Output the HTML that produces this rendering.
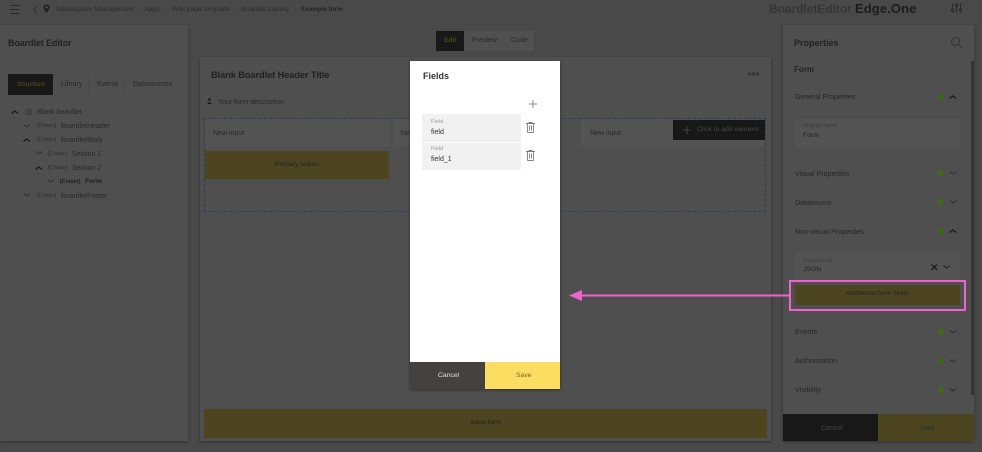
<!DOCTYPE html>
<html><head><meta charset="utf-8"><style>
html,body{margin:0;padding:0;width:982px;height:452px;overflow:hidden;background:#494949;font-family:"Liberation Sans",sans-serif;}
.a{position:absolute;white-space:nowrap;line-height:1;}
.p{position:absolute;background:#4f4f4f;box-shadow:0 1px 3px rgba(0,0,0,.35);}
svg{position:absolute;overflow:visible;fill:none;}
.t{color:#262626;font-size:7.2px;}
.d{color:#292929;font-size:7px;}
.c{color:#2e2e2e;font-size:5.6px;}
.b{color:#222;font-size:6.8px;}
.s{width:1px;height:9px;background:#444;top:5px;}
.dot{position:absolute;width:6px;height:6px;border-radius:50%;background:#3f6a12;left:938px;}
</style></head><body>

<!-- top bar -->
<svg style="left:10px;top:5px" width="10" height="8" stroke="#2a2a2a" stroke-width="1"><path d="M0 .5H9.5M0 4.5H9.5M0 8.5H9.5"/></svg>
<svg style="left:33px;top:6px" width="4" height="8" stroke="#2a2a2a" stroke-width=".8"><path d="M3.5 .5L.7 3.7L3.5 7"/></svg>
<svg style="left:43px;top:4px" width="7" height="10" fill="none"><path d="M3.5 .5C1.5 .5.5 2 .5 3.5C.5 5.5 2.5 7.5 3.5 9C4.5 7.5 6.5 5.5 6.5 3.5C6.5 2 5.5 .5 3.5 .5Z" fill="#1f1f1f"/><circle cx="3.5" cy="3.3" r="1.2" fill="#555"/></svg>
<div class="a" style="left:56px;top:7px;font-size:6.8px;color:#2b2b2b">Namespace Management</div>
<div class="a s" style="left:138px"></div>
<div class="a" style="left:144px;top:7px;font-size:6.8px;color:#2b2b2b">Apps</div>
<div class="a s" style="left:165px"></div>
<div class="a" style="left:172px;top:7px;font-size:6.8px;color:#2b2b2b">Wiki page template</div>
<div class="a s" style="left:235px"></div>
<div class="a" style="left:241px;top:7px;font-size:6.8px;color:#2b2b2b">Boardlet Library</div>
<div class="a s" style="left:295px"></div>
<div class="a" style="left:301px;top:7px;font-size:6.3px;color:#242424;font-weight:bold">Example form</div>
<div class="a" style="left:769px;top:3px;font-size:12px;font-weight:bold;color:#363636;letter-spacing:-.05px">BoardletEditor</div>
<div class="a" style="left:855px;top:2px;font-size:13px;font-weight:bold;color:#1d1d1d;letter-spacing:.1px">Edge.One</div>
<svg style="left:951px;top:3px" width="11" height="10" stroke="#252525" stroke-width=".8"><path d="M1.5 0V10M5.5 0V10M9.5 0V10"/><circle cx="1.5" cy="7" r="1.2" fill="#494949"/><circle cx="5.5" cy="2.5" r="1.2" fill="#494949"/><circle cx="9.5" cy="7" r="1.2" fill="#494949"/></svg>

<!-- left panel -->
<div class="p" style="left:0;top:25px;width:188px;height:416px"></div>
<div class="a" style="left:8px;top:39px;font-size:9px;color:#222;font-weight:bold;letter-spacing:-.1px">Boardlet Editor</div>
<div class="a" style="left:8px;top:74px;width:45px;height:21px;background:#181818"></div>
<div class="a" style="left:17px;top:82px;font-size:6.3px;color:#4f4518;font-weight:bold">Structure</div>
<div class="a d" style="left:61px;top:81px">Library</div>
<div class="a d" style="left:97px;top:81px">Events</div>
<div class="a d" style="left:133px;top:81px">Datasources</div>
<div class="a" style="left:88px;top:76px;width:1px;height:18px;background:#494949"></div>
<div class="a" style="left:124px;top:76px;width:1px;height:18px;background:#494949"></div>

<svg style="left:11px;top:110px" width="8" height="4" stroke="#1c1c1c" stroke-width="1.3"><path d="M.5 3.5L3.8 1L7 3.5"/></svg>
<svg style="left:25px;top:109px" width="7" height="6" stroke="#333" stroke-width=".7"><rect x=".5" y=".5" width="6" height="5" rx="1"/><path d="M2 2.5H5M2 4H5"/></svg>
<div class="a d" style="left:37px;top:109px">Blank boardlet</div>
<svg style="left:23px;top:124px" width="8" height="4" stroke="#2a2a2a" stroke-width=".8"><path d="M.5 .5L3.8 3L7 .5"/></svg>
<div class="a c" style="left:37px;top:124px">[Cntain]</div><div class="a d" style="left:61px;top:123px">BoardletHeader</div>
<svg style="left:23px;top:138px" width="8" height="4" stroke="#1c1c1c" stroke-width="1.3"><path d="M.5 3.5L3.8 1L7 3.5"/></svg>
<div class="a c" style="left:37px;top:138px">[Cntain]</div><div class="a d" style="left:61px;top:137px">BoardletBody</div>
<svg style="left:35px;top:151px" width="8" height="4" stroke="#2a2a2a" stroke-width=".8"><path d="M.5 .5L3.8 3L7 .5"/></svg>
<div class="a c" style="left:48px;top:152px">[Cntain]</div><div class="a d" style="left:72px;top:151px">Section 1</div>
<svg style="left:35px;top:166px" width="8" height="4" stroke="#1c1c1c" stroke-width="1.3"><path d="M.5 3.5L3.8 1L7 3.5"/></svg>
<div class="a c" style="left:48px;top:166px">[Cntain]</div><div class="a d" style="left:72px;top:165px">Section 2</div>
<svg style="left:47px;top:179px" width="8" height="4" stroke="#2a2a2a" stroke-width=".8"><path d="M.5 .5L3.8 3L7 .5"/></svg>
<div class="a" style="left:60px;top:180px;font-size:5.4px;color:#1e1e1e;font-weight:bold">[Cntain]</div><div class="a" style="left:85px;top:179px;font-size:6.8px;color:#1c1c1c;font-weight:bold">Form</div>
<svg style="left:23px;top:193px" width="8" height="4" stroke="#2a2a2a" stroke-width=".8"><path d="M.5 .5L3.8 3L7 .5"/></svg>
<div class="a c" style="left:37px;top:194px">[Cntain]</div><div class="a d" style="left:61px;top:193px">BoardletFooter</div>

<!-- center -->
<div class="a" style="left:436px;top:31px;width:28px;height:20px;background:#181818"></div>
<div class="a" style="left:444px;top:38px;font-size:6.8px;color:#4f4518;font-weight:bold">Edit</div>
<div class="a" style="left:464px;top:31px;width:39px;height:20px;background:#505050"></div>
<div class="a" style="left:503px;top:31px;width:31px;height:20px;background:#505050"></div>
<div class="a d" style="left:472px;top:37px">Preview</div>
<div class="a d" style="left:511px;top:37px">Code</div>

<div class="p" style="left:200px;top:57px;width:571px;height:384px"></div>
<div class="a" style="left:211px;top:71px;font-size:9.2px;color:#202020;font-weight:bold;letter-spacing:-.05px">Blank Boardlet Header Title</div>
<svg style="left:748px;top:72px" width="11" height="4" stroke="#252525" stroke-width=".7"><circle cx="1.5" cy="2" r="1.1"/><circle cx="5.5" cy="2" r="1.1"/><circle cx="9.5" cy="2" r="1.1"/></svg>
<svg style="left:207px;top:98px" width="5" height="6"><circle cx="2.5" cy="1.5" r="1.4" fill="#1c1c1c"/><path d="M.3 6C.3 3.5 4.7 3.5 4.7 6Z" fill="#1c1c1c"/></svg>
<div class="a d" style="left:218px;top:99px">Your form description</div>
<div class="a" style="left:204px;top:118px;width:562px;height:94px;border:1px dashed #343b5e;box-sizing:border-box"></div>
<div class="a" style="left:205px;top:119px;width:184px;height:28px;background:#535353"></div>
<div class="a" style="left:393px;top:119px;width:88px;height:28px;background:#535353"></div>
<div class="a" style="left:581px;top:119px;width:183px;height:28px;background:#535353"></div>
<div class="a d" style="left:213px;top:130px">New input</div>
<div class="a d" style="left:401px;top:130px">New input</div>
<div class="a d" style="left:590px;top:130px">New input</div>
<div class="a" style="left:205px;top:151px;width:184px;height:28px;background:#4d4420"></div>
<div class="a b" style="left:275px;top:162px">Primary button</div>
<div class="a" style="left:673px;top:120px;width:92px;height:20px;background:#181818"></div>
<svg style="left:683px;top:126px" width="8" height="8" stroke="#4a4a4a" stroke-width=".8"><path d="M4 0V8M0 4H8"/></svg>
<div class="a" style="left:697px;top:127px;font-size:6.8px;color:#474747">Click to add element</div>
<div class="a" style="left:204px;top:409px;width:563px;height:29px;background:#4d4420"></div>
<div class="a b" style="left:470px;top:420px">Save form</div>

<!-- right panel -->
<div class="p" style="left:783px;top:25px;width:191px;height:416px"></div>
<div class="a" style="left:794px;top:39px;font-size:9px;color:#222;font-weight:bold">Properties</div>
<svg style="left:951px;top:37px" width="11" height="11" stroke="#2c2c2c" stroke-width=".8"><circle cx="4.5" cy="4.5" r="4"/><path d="M7.5 7.5L10.5 10.5"/></svg>
<div class="a" style="left:794px;top:66px;font-size:8px;color:#242424;font-weight:bold">Form</div>
<div class="a" style="left:971px;top:61px;width:3px;height:334px;background:#343434"></div>

<div class="a t" style="left:795px;top:93px">General Properties</div>
<div class="dot" style="top:94px"></div>
<svg style="left:949px;top:95px" width="8" height="4" stroke="#1c1c1c" stroke-width="1.3"><path d="M.5 3.5L3.8 1L7 3.5"/></svg>
<div class="a" style="left:795px;top:119px;width:165px;height:28px;background:#535353"></div>
<div class="a" style="left:803px;top:124px;font-size:5.6px;color:#3a3a3a">Display name</div>
<div class="a" style="left:803px;top:133px;font-size:6.8px;color:#222">Form</div>

<div class="a t" style="left:795px;top:170px">Visual Properties</div>
<div class="dot" style="top:170px"></div>
<svg style="left:949px;top:171px" width="8" height="4" stroke="#2a2a2a" stroke-width=".8"><path d="M.5 .5L3.8 3L7 .5"/></svg>
<div class="a t" style="left:795px;top:199px">Datasource</div>
<div class="dot" style="top:199px"></div>
<svg style="left:949px;top:200px" width="8" height="4" stroke="#2a2a2a" stroke-width=".8"><path d="M.5 .5L3.8 3L7 .5"/></svg>
<div class="a t" style="left:795px;top:228px">Non-visual Properties</div>
<div class="dot" style="top:228px"></div>
<svg style="left:949px;top:229px" width="8" height="4" stroke="#1c1c1c" stroke-width="1.3"><path d="M.5 3.5L3.8 1L7 3.5"/></svg>
<div class="a" style="left:795px;top:253px;width:165px;height:28px;background:#535353"></div>
<div class="a" style="left:803px;top:259px;font-size:5.6px;color:#3a3a3a">Data format</div>
<div class="a" style="left:803px;top:267px;font-size:6.8px;color:#222">JSON</div>
<svg style="left:931px;top:264px" width="7" height="7" stroke="#1c1c1c" stroke-width="1.4"><path d="M.5 .5L6 6M6 .5L.5 6"/></svg>
<svg style="left:943px;top:265px" width="8" height="4" stroke="#1c1c1c" stroke-width="1"><path d="M.5 .5L3.8 3L7 .5"/></svg>
<div class="a" style="left:795px;top:285px;width:165px;height:20px;background:#4d4420"></div>
<div class="a b" style="left:846px;top:291px">Additional form fields</div>

<div class="a t" style="left:795px;top:328px">Events</div>
<div class="dot" style="top:329px"></div>
<svg style="left:949px;top:330px" width="8" height="4" stroke="#2a2a2a" stroke-width=".8"><path d="M.5 .5L3.8 3L7 .5"/></svg>
<div class="a t" style="left:795px;top:357px">Authorization</div>
<div class="dot" style="top:358px"></div>
<svg style="left:949px;top:359px" width="8" height="4" stroke="#2a2a2a" stroke-width=".8"><path d="M.5 .5L3.8 3L7 .5"/></svg>
<div class="a t" style="left:795px;top:386px">Visibility</div>
<div class="dot" style="top:387px"></div>
<svg style="left:949px;top:388px" width="8" height="4" stroke="#2a2a2a" stroke-width=".8"><path d="M.5 .5L3.8 3L7 .5"/></svg>

<div class="a" style="left:783px;top:414px;width:95px;height:27px;background:#181818"></div>
<div class="a" style="left:878px;top:414px;width:96px;height:27px;background:#4d4420"></div>
<div class="a" style="left:821px;top:425px;font-size:7px;color:#444">Cancel</div>
<div class="a" style="left:919px;top:425px;font-size:7px;color:#2c2c2c">Save</div>

<!-- dialog -->
<div class="a" style="left:410px;top:61px;width:150px;height:328px;background:#fff;box-shadow:0 1px 3px rgba(0,0,0,.4)"></div>
<div class="a" style="left:423px;top:72px;font-size:9px;color:#333;font-weight:bold">Fields</div>
<svg style="left:529px;top:100px" width="8" height="8" stroke="#666" stroke-width=".7"><path d="M4 0V8M0 4H8"/></svg>
<div class="a" style="left:422px;top:114px;width:99px;height:28px;background:#f1f1f1"></div>
<div class="a" style="left:422px;top:143px;width:99px;height:27px;background:#f1f1f1"></div>
<div class="a" style="left:431px;top:120px;font-size:5.6px;color:#999">Field</div>
<div class="a" style="left:431px;top:129px;font-size:7px;color:#333">field</div>
<div class="a" style="left:431px;top:147px;font-size:5.6px;color:#999">Field</div>
<div class="a" style="left:431px;top:156px;font-size:7px;color:#333">field_1</div>
<svg style="left:526px;top:122px" width="9" height="11" stroke="#5a5a5a" stroke-width=".7"><path d="M0 1.5H9M3 1.5V.4H6V1.5M1.2 1.5L1.7 10.5H7.3L7.8 1.5M3.5 3.5V8.5M5.5 3.5V8.5"/></svg>
<svg style="left:526px;top:150px" width="9" height="11" stroke="#5a5a5a" stroke-width=".7"><path d="M0 1.5H9M3 1.5V.4H6V1.5M1.2 1.5L1.7 10.5H7.3L7.8 1.5M3.5 3.5V8.5M5.5 3.5V8.5"/></svg>
<div class="a" style="left:410px;top:362px;width:75px;height:27px;background:#434240"></div>
<div class="a" style="left:485px;top:362px;width:75px;height:27px;background:#fbdd62"></div>
<div class="a" style="left:438px;top:373px;font-size:6.8px;color:#e0e0e0">Cancel</div>
<div class="a" style="left:516px;top:373px;font-size:6.8px;color:#6b6433">Save</div>

<!-- annotation -->
<div class="a" style="left:789px;top:280px;width:177px;height:31px;border:2px solid #f062cc;box-sizing:border-box"></div>
<svg style="left:569px;top:290px" width="221" height="11"><path d="M220 5.5H10" stroke="#f062cc" stroke-width="2"/><path d="M0 5.5L13 0V11Z" fill="#f062cc"/></svg>
</body></html>
